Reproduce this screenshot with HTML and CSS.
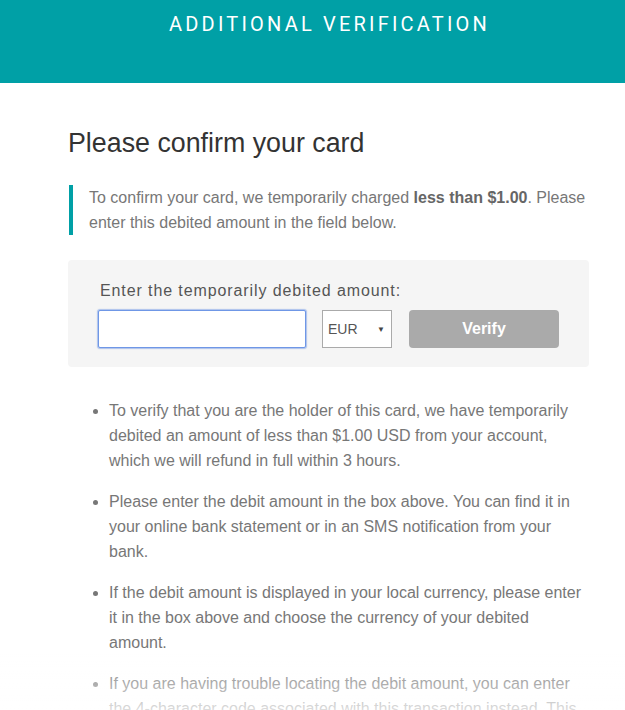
FILE: index.html
```html
<!DOCTYPE html>
<html lang="en">
<head>
<meta charset="utf-8">
<title>Additional Verification</title>
<link rel="stylesheet" href="styles.css">
</head>
<body>
<header class="topbar">
  <div class="topbar-title">ADDITIONAL VERIFICATION</div>
</header>
<main class="content">
  <h1 class="title">Please confirm your card</h1>
  <blockquote class="note">To confirm your card, we temporarily charged <strong>less than $1.00</strong>. Please enter this debited amount in the field below.</blockquote>
  <form class="verify-box">
    <label class="verify-label" for="amount">Enter the temporarily debited amount:</label>
    <div class="verify-row">
      <input class="amount-input" id="amount" type="text">
      <div class="currency">
        <span class="currency-value">EUR</span>
        <span class="currency-arrow">&#9660;</span>
      </div>
      <button class="verify-btn" type="button">Verify</button>
    </div>
  </form>
  <ul class="info-list">
    <li>To verify that you are the holder of this card, we have temporarily debited an amount of less than $1.00 USD from your account, which we will refund in full within 3 hours.</li>
    <li>Please enter the debit amount in the box above. You can find it in your online bank statement or in an SMS notification from your bank.</li>
    <li>If the debit amount is displayed in your local currency, please enter it in the box above and choose the currency of your debited amount.</li>
    <li>If you are having trouble locating the debit amount, you can enter the 4-character code associated with this transaction instead. This code can be found next to the debit in your bank statement.</li>
  </ul>
</main>
<div class="fade"></div>
</body>
</html>
```
FILE: styles.css
```css
html, body {
  margin: 0;
  padding: 0;
  background: #fff;
}
body {
  font-family: "Liberation Sans", Arial, sans-serif;
  color: #777;
}
.topbar {
  height: 83px;
  background: #00a0a6;
  box-sizing: border-box;
  padding: 12px 0 0 34px;
  text-align: center;
}
.topbar-title {
  font-family: Roboto, "Liberation Sans", sans-serif;
  font-size: 20px;
  line-height: 24px;
  letter-spacing: 3.2px;
  color: #fff;
}
.content {
  width: 521px;
  margin-left: 68px;
}
.title {
  margin: 45px 0 0 0;
  font-size: 26.8px;
  line-height: 30px;
  font-weight: normal;
  color: #333;
}
.note {
  margin: 27px 0 0 1px;
  padding: 0 0 0 16px;
  border-left: 4px solid #00a0a6;
  font-size: 16px;
  line-height: 25px;
  color: #777;
}
.note strong {
  color: #666;
}
.verify-box {
  margin: 25px 0 0 0;
  padding: 21px 30px 19px 30px;
  background: #f5f5f5;
  border-radius: 4px;
}
.verify-label {
  display: block;
  padding-left: 2px;
  margin-bottom: 9px;
  font-size: 16px;
  line-height: 20px;
  letter-spacing: 0.9px;
  color: #555;
}
.verify-row {
  display: flex;
  align-items: center;
}
.amount-input {
  box-sizing: border-box;
  width: 208px;
  height: 38px;
  margin: 0;
  border: 1px solid #6f97e6;
  border-radius: 2px;
  box-shadow: 0 0 1px 1px rgba(111, 151, 230, 0.55);
  background: #fff;
  outline: none;
  font-size: 16px;
}
.currency {
  box-sizing: border-box;
  width: 70px;
  height: 38px;
  margin-left: 16px;
  padding: 0 6px 0 5px;
  border: 1px solid #aaa;
  background: #fff;
  display: flex;
  align-items: center;
  justify-content: space-between;
  font-size: 14px;
  color: #555;
}
.currency-arrow {
  font-size: 8px;
  color: #444;
}
.verify-btn {
  width: 150px;
  height: 38px;
  margin-left: 17px;
  border: none;
  border-radius: 4px;
  background: #aaa;
  color: #fff;
  font-family: "Liberation Sans", Arial, sans-serif;
  font-size: 16px;
  font-weight: bold;
}
.info-list {
  margin: 31px 0 0 0;
  padding: 0 0 0 41px;
  font-size: 16px;
  line-height: 25px;
  color: #777;
}
.info-list li {
  margin-bottom: 16px;
}
.fade {
  position: fixed;
  left: 0;
  right: 0;
  bottom: 0;
  height: 56px;
  background: linear-gradient(rgba(255, 255, 255, 0), rgba(255, 255, 255, 0.75));
  pointer-events: none;
}
```
